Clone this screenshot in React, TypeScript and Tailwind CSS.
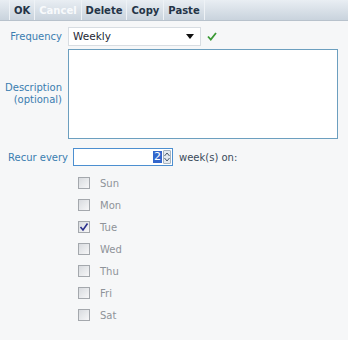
import React from "react";

const days = ["Sun", "Mon", "Tue", "Wed", "Thu", "Fri", "Sat"];

function Check({ checked }: { checked?: boolean }) {
  return (
    <span className="w-[12px] h-[12px] border border-[#a4a8ad] bg-gradient-to-br from-[#d8dbdf] to-[#f7f7f8] flex items-center justify-center">
      {checked && (
        <svg width="10" height="10" viewBox="0 0 10 10">
          <path d="M1.5 5 L4 8 L8.5 1.5" fill="none" stroke="#2a2f8c" strokeWidth="1.6" />
        </svg>
      )}
    </span>
  );
}

export default function App() {
  const buttons = [
    { label: "OK", disabled: false },
    { label: "Cancel", disabled: true },
    { label: "Delete", disabled: false },
    { label: "Copy", disabled: false },
    { label: "Paste", disabled: false },
  ];

  return (
    <div className="w-[348px] h-[340px] bg-[#f6f7f8] text-[10px] font-['DejaVu_Sans',Verdana,sans-serif] overflow-hidden">
      {/* Toolbar */}
      <div className="h-[21px] flex items-stretch border-b border-[#b8c2cc] bg-gradient-to-b from-[#e9eef3] to-[#c9d3dd]">
        <div className="flex items-stretch ml-[9px] border-l border-[#eef2f6]">
          {buttons.map((b) => (
            <span
              key={b.label}
              className={`px-[4px] flex items-center font-bold border-r border-[#eef2f6] ${
                b.disabled ? "text-[#f8fafc]" : "text-[#243447]"
              }`}
            >
              {b.label}
            </span>
          ))}
        </div>
      </div>

      {/* Frequency */}
      <div className="flex items-center mt-[6px] h-[19px]">
        <span className="w-[64px] pr-[2px] text-right text-[#3a7db0]">Frequency</span>
        <div className="ml-[4px] w-[133px] h-[19px] bg-white border border-[#d8dde2] flex items-center justify-between pl-[4px] pr-[6px] text-[#1d2733]">
          <span className="text-[10.5px]">Weekly</span>
          <svg width="8" height="5" viewBox="0 0 8 5">
            <path d="M0 0 L8 0 L4 5 Z" fill="#111" />
          </svg>
        </div>
        <svg className="ml-[6px]" width="10" height="9" viewBox="0 0 10 9">
          <path d="M1 4.5 L3.8 7.5 L9 1" fill="none" stroke="#3b9a35" strokeWidth="1.8" />
        </svg>
      </div>

      {/* Description */}
      <div className="flex items-center mt-[3px]">
        <span className="w-[64px] pr-[2px] text-right text-[#3a7db0] leading-[12px]">
          Description
          <br />
          (optional)
        </span>
        <textarea className="ml-[4px] w-[270px] h-[90px] bg-white border border-[#6c9fbf] resize-none outline-none" />
      </div>

      {/* Recur every */}
      <div className="flex items-center mt-[9px] h-[18px]">
        <span className="w-[65px] pl-[8px] whitespace-nowrap text-[#3a7db0]">Recur every</span>
        <div className="ml-[8px] w-[100px] h-[18px] bg-white border border-[#4c8fd0] flex items-center justify-end">
          <span className="bg-[#3366cc] text-white text-[11px] leading-[12px] px-[1px]">2</span>
          <span className="w-[8px] h-[14px] flex flex-col items-center justify-center ml-[1px] mr-[1px] bg-[#e4e9ef] border border-[#a8b4c0] rounded-[1px]">
            <svg width="6" height="12" viewBox="0 0 6 12">
              <path d="M0.5 5 L3 2 L5.5 5" fill="none" stroke="#4a5a6a" strokeWidth="1" />
              <path d="M0.5 7 L3 10 L5.5 7" fill="none" stroke="#4a5a6a" strokeWidth="1" />
            </svg>
          </span>
        </div>
        <span className="ml-[6px] text-[#3a4a5a]">week(s) on:</span>
      </div>

      {/* Days */}
      <div className="flex flex-col mt-[11px] pl-[78px] gap-[10px]">
        {days.map((d) => (
          <div key={d} className="flex items-center h-[12px]">
            <Check checked={d === "Tue"} />
            <span className="ml-[10px] text-[#8e9399]">{d}</span>
          </div>
        ))}
      </div>
    </div>
  );
}
